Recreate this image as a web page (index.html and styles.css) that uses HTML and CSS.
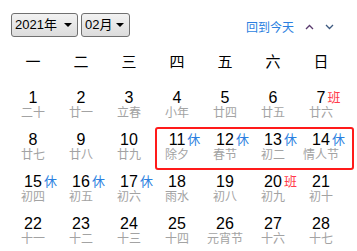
FILE: index.html
```html
<!DOCTYPE html>
<html lang="zh-CN">
<head>
  <meta charset="UTF-8" />
  <meta name="viewport" content="width=device-width, initial-scale=1.0"/>
  <title>日历</title>
  <link rel="stylesheet" href="styles.css">
</head>
<body>
  <div class="calendar">
    <div class="toolbar">
      <div class="pickers">
        <div class="picker picker-year">2021年</div>
        <div class="picker picker-month">02月</div>
      </div>
      <div class="nav">
        <a class="today-link">回到今天</a>
        <span class="arrow">
          <svg width="9" height="6" viewBox="0 0 9 6"><path d="M1 5 L4.5 1.5 L8 5" fill="none" stroke="#5a3a6e" stroke-width="1.3"/></svg>
        </span>
        <span class="arrow">
          <svg width="9" height="6" viewBox="0 0 9 6"><path d="M1 1 L4.5 4.5 L8 1" fill="none" stroke="#3d5a80" stroke-width="1.3"/></svg>
        </span>
      </div>
    </div>

    <div class="weekdays">
      <span>一</span><span>二</span><span>三</span><span>四</span><span>五</span><span>六</span><span>日</span>
    </div>

    <div class="days">
      <div class="day"><span class="num">1</span><span class="lunar">二十</span></div>
      <div class="day"><span class="num">2</span><span class="lunar">廿一</span></div>
      <div class="day"><span class="num">3</span><span class="lunar">立春</span></div>
      <div class="day"><span class="num">4</span><span class="lunar">小年</span></div>
      <div class="day"><span class="num">5</span><span class="lunar">廿四</span></div>
      <div class="day"><span class="num">6</span><span class="lunar">廿五</span></div>
      <div class="day"><span class="num">7<i class="tag work">班</i></span><span class="lunar">廿六</span></div>

      <div class="day"><span class="num">8</span><span class="lunar">廿七</span></div>
      <div class="day"><span class="num">9</span><span class="lunar">廿八</span></div>
      <div class="day"><span class="num">10</span><span class="lunar">廿九</span></div>
      <div class="day"><span class="num">11<i class="tag rest">休</i></span><span class="lunar">除夕</span></div>
      <div class="day"><span class="num">12<i class="tag rest">休</i></span><span class="lunar">春节</span></div>
      <div class="day"><span class="num">13<i class="tag rest">休</i></span><span class="lunar">初二</span></div>
      <div class="day"><span class="num">14<i class="tag rest">休</i></span><span class="lunar">情人节</span></div>

      <div class="day"><span class="num">15<i class="tag rest">休</i></span><span class="lunar">初四</span></div>
      <div class="day"><span class="num">16<i class="tag rest">休</i></span><span class="lunar">初五</span></div>
      <div class="day"><span class="num">17<i class="tag rest">休</i></span><span class="lunar">初六</span></div>
      <div class="day"><span class="num">18</span><span class="lunar">雨水</span></div>
      <div class="day"><span class="num">19</span><span class="lunar">初八</span></div>
      <div class="day"><span class="num">20<i class="tag work">班</i></span><span class="lunar">初九</span></div>
      <div class="day"><span class="num">21</span><span class="lunar">初十</span></div>

      <div class="day"><span class="num">22</span><span class="lunar">十一</span></div>
      <div class="day"><span class="num">23</span><span class="lunar">十二</span></div>
      <div class="day"><span class="num">24</span><span class="lunar">十三</span></div>
      <div class="day"><span class="num">25</span><span class="lunar">十四</span></div>
      <div class="day"><span class="num">26</span><span class="lunar">元宵节</span></div>
      <div class="day"><span class="num">27</span><span class="lunar">十六</span></div>
      <div class="day"><span class="num">28</span><span class="lunar">十七</span></div>

      <!-- highlight around the spring festival holiday -->
      <div class="highlight"></div>
    </div>
  </div>
</body>
</html>
```

FILE: styles.css
```css
  body {
    margin: 0;
    background: #fff;
    font-family: "Liberation Sans", "Noto Sans CJK SC", sans-serif;
    color: #000;
  }
  .calendar {
    width: 357px;
    padding: 13px 12px 0 9px;
    box-sizing: border-box;
  }
  .toolbar {
    display: flex;
    justify-content: space-between;
    align-items: center;
    height: 24px;
  }
  .pickers {
    display: flex;
    gap: 3px;
    padding-left: 2px;
  }
  .picker {
    position: relative;
    height: 24px;
    box-sizing: border-box;
    padding: 0 0 0 3px;
    border: 1px solid #707070;
    border-radius: 3px;
    background: linear-gradient(#f2f2f2, #dcdcdc);
    font-size: 13px;
    line-height: 22px;
    color: #000;
  }
  .picker::after {
    content: "";
    position: absolute;
    right: 5px;
    top: 9px;
    border-left: 4px solid transparent;
    border-right: 4px solid transparent;
    border-top: 4px solid #000;
  }
  .picker-year { width: 67px; }
  .picker-month { width: 49px; }
  .nav {
    display: flex;
    align-items: center;
    gap: 11px;
    padding-right: 11px;
    padding-top: 3px;
  }
  .today-link {
    color: #2b7fe0;
    font-size: 12px;
  }
  .arrow {
    display: flex;
    width: 9px;
    height: 6px;
  }
  .weekdays {
    display: grid;
    grid-template-columns: repeat(7, 48px);
    height: 39px;
    margin-top: 5px;
    line-height: 39px;
    text-align: center;
    font-size: 15px;
  }
  .days {
    position: relative;
    display: grid;
    grid-template-columns: repeat(7, 48px);
    grid-auto-rows: 42px;
  }
  .day {
    display: flex;
    flex-direction: column;
    align-items: center;
    padding-top: 8px;
  }
  .num {
    position: relative;
    font-size: 16px;
    line-height: 18px;
  }
  .lunar {
    font-size: 12px;
    line-height: 13px;
    color: #a3a3a3;
    white-space: nowrap;
  }
  .tag {
    position: absolute;
    left: 100%;
    top: 1px;
    margin-left: 2px;
    font-style: normal;
    font-size: 13px;
    line-height: 16px;
  }
  .tag.rest { color: #2b7fe0; }
  .tag.work { color: #ff3b4a; }
  .highlight {
    position: absolute;
    left: 146px;
    top: 46px;
    width: 199px;
    height: 43px;
    box-sizing: border-box;
    border: 2px solid #ff1a1a;
    border-radius: 3px;
    pointer-events: none;
  }
```
